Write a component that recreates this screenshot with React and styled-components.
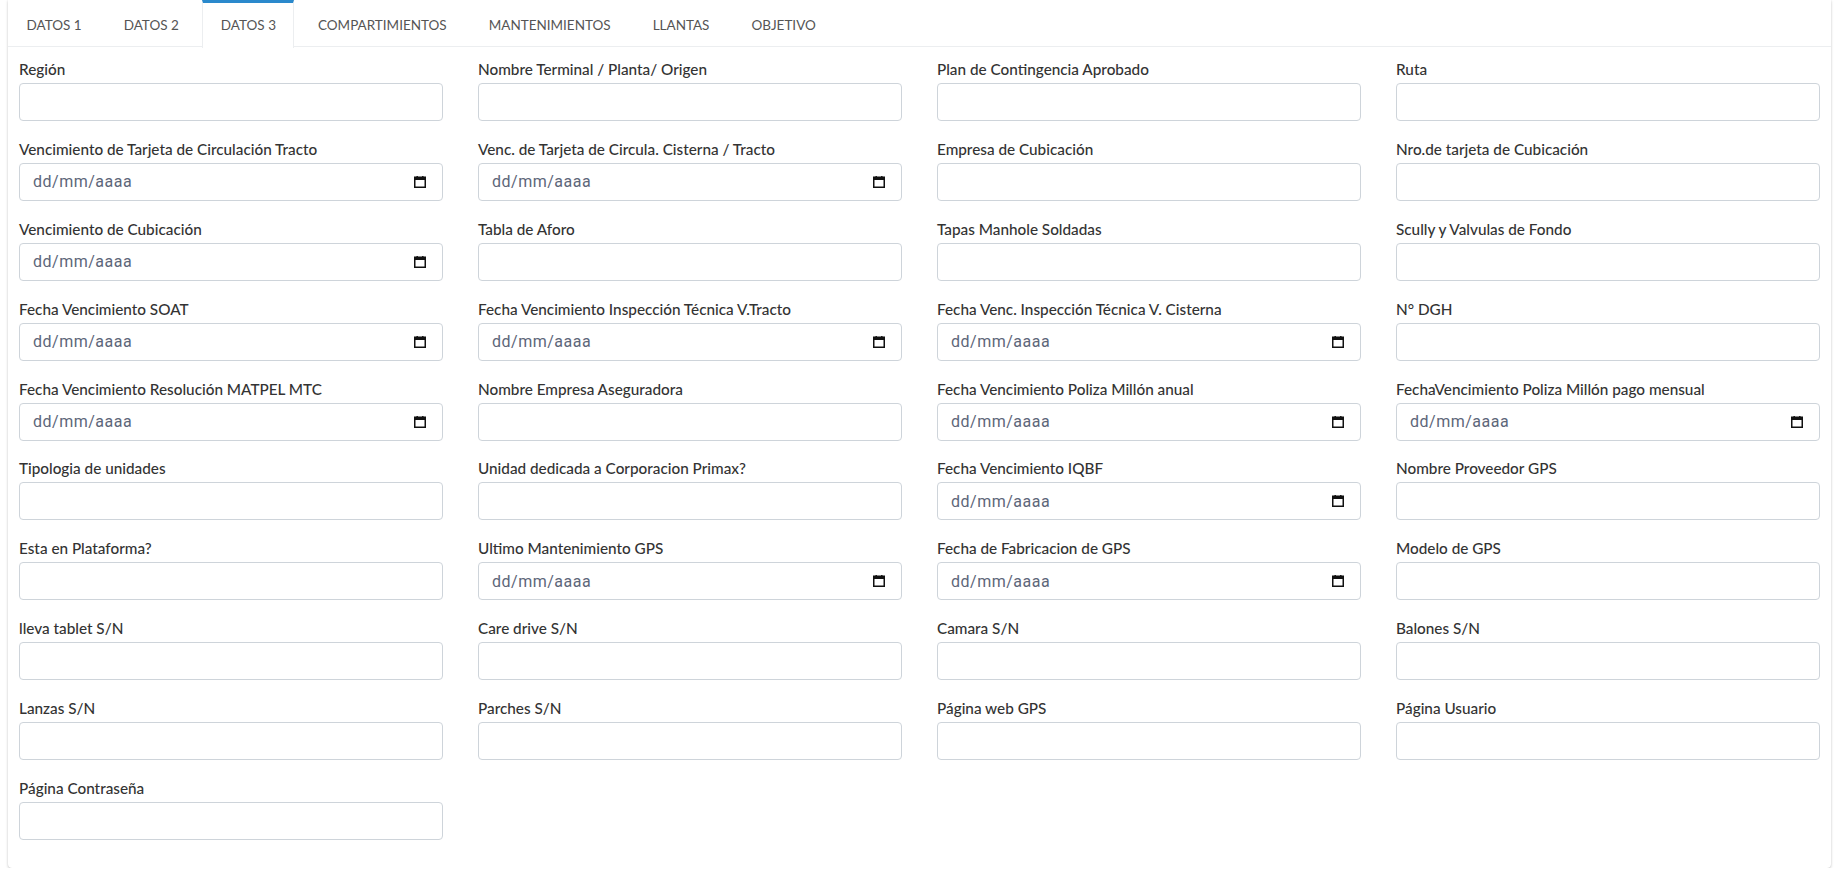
import React from "react";
import styled, { createGlobalStyle } from "styled-components";

const GlobalStyle = createGlobalStyle`
  html, body {
    margin: 0;
    padding: 0;
    background: #fff;
  }
  body {
    font-family: "Source Sans Pro", Lato, "Noto Sans", sans-serif;
    color: #212529;
  }
`;

const Page = styled.div`
  padding: 0 17px 0 8px;
`;

const Card = styled.div`
  background: #fff;
  border-radius: 0 0 4px 4px;
  box-shadow: 0 0 1px rgba(0, 0, 0, 0.125), 0 1px 3px rgba(0, 0, 0, 0.2);
`;

const TabBar = styled.ul`
  display: flex;
  gap: 5px;
  list-style: none;
  margin: 0;
  padding: 0;
  height: 47px;
  border-bottom: 1px solid #eceef0;
  box-sizing: border-box;
`;

const Tab = styled.li`
  display: flex;
  align-items: center;
  box-sizing: border-box;
  height: ${(p) => (p.$active ? "48px" : "46px")};
  padding: 0 17.5px;
  padding-bottom: ${(p) => (p.$active ? "2px" : "0")};
  font-size: 13.5px;
  text-transform: uppercase;
  color: #555;
  background: ${(p) => (p.$active ? "#fff" : "transparent")};
  border-top: 3px solid ${(p) => (p.$active ? "#2a89cc" : "transparent")};
  border-left: 1px solid ${(p) => (p.$active ? "#eceef0" : "transparent")};
  border-right: 1px solid ${(p) => (p.$active ? "#eceef0" : "transparent")};
  cursor: pointer;
`;

const Body = styled.div`
  display: grid;
  grid-template-columns: repeat(4, 1fr);
  column-gap: 35px;
  padding: 11px 11px 11px 11px;
`;

const Field = styled.div`
  margin-bottom: 16.9px;
`;

const Label = styled.label`
  display: block;
  font-size: 15.3px;
  line-height: 22px;
  font-weight: 500;
  color: #333;
  margin-bottom: 3px;
  white-space: nowrap;
`;

const Input = styled.input`
  display: block;
  box-sizing: border-box;
  width: 100%;
  height: 38px;
  padding: 6px 12px;
  border: 1px solid #ced4da;
  border-radius: 4px;
  font-size: 16px;
  color: #495057;
  background: #fff;
  outline: none;
`;

const DateBox = styled.div`
  display: flex;
  align-items: center;
  box-sizing: border-box;
  height: 38px;
  padding: 0 16px 0 13px;
  border: 1px solid #ced4da;
  border-radius: 4px;
  background: #fff;
`;

const DateText = styled.input`
  flex: 1;
  min-width: 0;
  border: 0;
  padding: 0;
  outline: none;
  background: transparent;
  font-family: Roboto, "Liberation Sans", sans-serif;
  font-size: 16px;
  letter-spacing: 0.5px;
  color: #495057;
  &::placeholder {
    color: #5d6679;
    opacity: 1;
  }
`;

const CalendarIcon = () => (
  <svg width="12" height="12" viewBox="0 0 12 12" aria-hidden="true">
    <rect x="0.75" y="1.25" width="10.5" height="10" fill="none" stroke="#111" strokeWidth="1.5" />
    <rect x="0.5" y="1" width="11" height="3" fill="#111" />
    <rect x="2.5" y="0" width="1.4" height="2" fill="#111" />
    <rect x="8.1" y="0" width="1.4" height="2" fill="#111" />
  </svg>
);

const tabs = [
  "Datos 1",
  "Datos 2",
  "Datos 3",
  "Compartimientos",
  "Mantenimientos",
  "Llantas",
  "Objetivo",
];

const fields = [
  ["Región"],
  ["Nombre Terminal / Planta/ Origen"],
  ["Plan de Contingencia Aprobado"],
  ["Ruta"],
  ["Vencimiento de Tarjeta de Circulación Tracto", "date"],
  ["Venc. de Tarjeta de Circula. Cisterna / Tracto", "date"],
  ["Empresa de Cubicación"],
  ["Nro.de tarjeta de Cubicación"],
  ["Vencimiento de Cubicación", "date"],
  ["Tabla de Aforo"],
  ["Tapas Manhole Soldadas"],
  ["Scully y Valvulas de Fondo"],
  ["Fecha Vencimiento SOAT", "date"],
  ["Fecha Vencimiento Inspección Técnica V.Tracto", "date"],
  ["Fecha Venc. Inspección Técnica V. Cisterna", "date"],
  ["N° DGH"],
  ["Fecha Vencimiento Resolución MATPEL MTC", "date"],
  ["Nombre Empresa Aseguradora"],
  ["Fecha Vencimiento Poliza Millón anual", "date"],
  ["FechaVencimiento Poliza Millón pago mensual", "date"],
  ["Tipologia de unidades"],
  ["Unidad dedicada a Corporacion Primax?"],
  ["Fecha Vencimiento IQBF", "date"],
  ["Nombre Proveedor GPS"],
  ["Esta en Plataforma?"],
  ["Ultimo Mantenimiento GPS", "date"],
  ["Fecha de Fabricacion de GPS", "date"],
  ["Modelo de GPS"],
  ["lleva tablet S/N"],
  ["Care drive S/N"],
  ["Camara S/N"],
  ["Balones S/N"],
  ["Lanzas S/N"],
  ["Parches S/N"],
  ["Página web GPS"],
  ["Página Usuario"],
  ["Página Contraseña"],
];

const FormField = ({ label, type, id }) => (
  <Field>
    <Label htmlFor={id}>{label}</Label>
    {type === "date" ? (
      <DateBox>
        <DateText id={id} type="text" placeholder="dd/mm/aaaa" />
        <CalendarIcon />
      </DateBox>
    ) : (
      <Input id={id} type="text" />
    )}
  </Field>
);

export default function App() {
  return (
    <>
      <GlobalStyle />
      <Page>
        <Card>
          <TabBar>
            {tabs.map((t) => (
              <Tab key={t} $active={t === "Datos 3"}>
                {t}
              </Tab>
            ))}
          </TabBar>
          <Body>
            {fields.map(([label, type], i) => (
              <FormField key={label} id={`f${i}`} label={label} type={type} />
            ))}
          </Body>
        </Card>
      </Page>
    </>
  );
}
